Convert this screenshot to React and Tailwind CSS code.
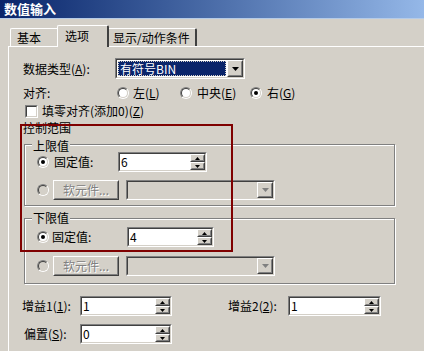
import React from "react";

const FONT = { fontFamily: '"Noto Sans CJK SC", "Liberation Sans", sans-serif' };

// sunken 2px field (classic win look)
function Sunken({ className = "", inner = "bg-white", children }) {
  return (
    <div
      className={`border border-t-[#808080] border-l-[#808080] border-b-white border-r-white ${className}`}
    >
      <div
        className={`h-full w-full border border-t-[#404040] border-l-[#404040] border-b-[#d4d0c8] border-r-[#d4d0c8] ${inner}`}
      >
        {children}
      </div>
    </div>
  );
}

function Raised({ className = "", children }) {
  return (
    <div
      className={`border border-t-white border-l-white border-b-[#404040] border-r-[#404040] ${className}`}
    >
      <div className="h-full w-full border border-t-[#d4d0c8] border-l-[#d4d0c8] border-b-[#808080] border-r-[#808080] bg-[#d4d0c8] flex items-center justify-center">
        {children}
      </div>
    </div>
  );
}

function Radio({ checked = false, disabled = false }) {
  return (
    <div className="w-[12px] h-[12px] shrink-0 rounded-full border border-t-[#808080] border-l-[#808080] border-b-white border-r-white">
      <div
        className={`w-full h-full rounded-full border border-t-[#404040] border-l-[#404040] border-b-[#d4d0c8] border-r-[#d4d0c8] flex items-center justify-center ${
          disabled ? "bg-[#d4d0c8]" : "bg-white"
        }`}
      >
        {checked && <div className="w-[4px] h-[4px] rounded-full bg-black" />}
      </div>
    </div>
  );
}

function Arrow({ up = false, color = "#000" }) {
  return (
    <svg width="7" height="4" viewBox="0 0 7 4">
      <path d={up ? "M3.5 0 L7 4 L0 4 Z" : "M0 0 L7 0 L3.5 4 Z"} fill={color} />
    </svg>
  );
}

function Spin({ value, className }) {
  return (
    <Sunken className={`h-[20px] ${className}`}>
      <div className="flex h-full">
        <div className="flex-1 pl-[1px] text-[12px] leading-[16px] text-black">{value}</div>
        <div className="flex flex-col w-[15px]">
          <Raised className="h-[8px] w-[15px]">
            <svg width="5" height="3" viewBox="0 0 5 3"><path d="M2.5 0 L5 3 L0 3Z" fill="#000" /></svg>
          </Raised>
          <Raised className="h-[8px] w-[15px]">
            <svg width="5" height="3" viewBox="0 0 5 3"><path d="M0 0 L5 0 L2.5 3Z" fill="#000" /></svg>
          </Raised>
        </div>
      </div>
    </Sunken>
  );
}

function DisabledRow() {
  return (
    <div className="flex items-center h-[20px]">
      <div className="ml-[12px]">
        <Radio disabled />
      </div>
      <Raised className="ml-[4px] w-[66px] h-[20px]">
        <span className="text-[12px] text-[#808080] [text-shadow:1px_1px_0_#fff]">软元件...</span>
      </Raised>
      <Sunken className="ml-[7px] w-[149px] h-[20px]" inner="bg-[#d4d0c8]">
        <div className="flex justify-end h-full">
          <Raised className="w-[16px] h-full">
            <svg width="7" height="4" viewBox="0 0 7 4">
              <path d="M0 0 L7 0 L3.5 4 Z" fill="#808080" />
            </svg>
          </Raised>
        </div>
      </Sunken>
    </div>
  );
}

function Group({ label, className, labelClass = "top-[-7px]", children }) {
  return (
    <div
      className={`relative ml-[15px] w-[371px] border border-[#808080] shadow-[inset_1px_1px_0_#fff,1px_1px_0_#fff] ${className}`}
    >
      <span className={`absolute left-[7px] px-[1px] bg-[#d4d0c8] text-[12px] leading-[12px] ${labelClass}`}>
        {label}
      </span>
      {children}
    </div>
  );
}

export default function App() {
  return (
    <div
      className="relative w-[424px] h-[351px] overflow-hidden bg-[#d4d0c8] text-black text-[12px]"
      style={FONT}
    >
      {/* title bar */}
      <div className="h-[19px] bg-gradient-to-r from-[#0a246a] to-[#95b8e8] flex items-center pl-[4px] border-b border-[#b5cbe8]">
        <span className="text-white font-bold text-[13px] leading-[14px]">数值输入</span>
      </div>

      {/* tabs */}
      <div className="flex items-end h-[27px] pl-[10px] mt-0">
        <div className="w-[47px] h-[18px] border-l border-t border-white rounded-tl-[2px] flex items-center pl-[6px] leading-[14px]">
          基本
        </div>
        <div className="relative z-10 w-[52px] h-[22px] -mb-[1px] bg-[#d4d0c8] border-l border-t border-white border-r-2 border-r-[#404040] rounded-t-[2px] flex items-start pt-[3px] pl-[7px] leading-[14px]">
          选项
        </div>
        <div className="w-[88px] h-[18px] border-t border-white border-r-2 border-r-[#404040] rounded-tr-[2px] flex items-center pl-[4px] leading-[14px]">
          显示/动作条件
        </div>
      </div>

      {/* panel */}
      <div className="ml-[8px] h-[310px] border-l border-t border-white flex flex-col">
        {/* data type */}
        <div className="flex items-center h-[21px] mt-[11px] ml-[14px]">
          <span className="w-[92px]">
            数据类型(<u>A</u>):
          </span>
          <Sunken className="w-[130px] h-[21px]">
            <div className="flex h-full items-stretch">
              <div className="flex-1 m-[1px] bg-[#0a246a] text-white outline-1 outline-dotted outline-[#d4d0c8] -outline-offset-1 pl-[2px] leading-[15px]">
                有符号BIN
              </div>
              <Raised className="w-[16px]">
                <Arrow />
              </Raised>
            </div>
          </Sunken>
        </div>

        {/* align */}
        <div className="flex items-center h-[16px] mt-[6px] ml-[14px]">
          <span className="w-[94px]">对齐:</span>
          <div className="w-[63px] flex items-center gap-[4px]">
            <Radio />
            <span>
              左(<u>L</u>)
            </span>
          </div>
          <div className="w-[70px] flex items-center gap-[5px]">
            <Radio />
            <span>
              中央(<u>E</u>)
            </span>
          </div>
          <div className="flex items-center gap-[5px]">
            <Radio checked />
            <span>
              右(<u>G</u>)
            </span>
          </div>
        </div>

        {/* zero fill */}
        <div className="flex items-center h-[16px] mt-[2px] ml-[16px] gap-[4px]">
          <Sunken className="w-[13px] h-[13px]" />
          <span>
            填零对齐(添加0)(<u>Z</u>)
          </span>
        </div>

        <div className="mt-[3px] ml-[14px] h-[12px] leading-[12px]">控制范围</div>

        {/* upper */}
        <Group label="上限值" className="mt-[10px] h-[62px]" labelClass="top-[-5px]">
          <div className="flex items-center h-[20px] mt-[7px]">
            <div className="ml-[12px]">
              <Radio checked />
            </div>
            <span className="ml-[5px] w-[64px]">固定值:</span>
            <Spin value="6" className="w-[89px]" />
          </div>
          <div className="mt-[8px]">
            <DisabledRow />
          </div>
        </Group>

        {/* lower */}
        <Group label="下限值" className="mt-[12px] h-[66px]">
          <div className="flex items-center h-[20px] mt-[8px]">
            <div className="ml-[12px]">
              <Radio checked />
            </div>
            <span className="ml-[3px] w-[75px]">固定值:</span>
            <Spin value="4" className="w-[87px]" />
          </div>
          <div className="mt-[9px]">
            <DisabledRow />
          </div>
        </Group>

        {/* gains */}
        <div className="flex items-center h-[20px] mt-[12px] ml-[13px]">
          <span className="w-[58px]">
            增益1(<u>1</u>):
          </span>
          <Spin value="1" className="w-[92px]" />
          <span className="ml-[56px] w-[60px]">
            增益2(<u>2</u>):
          </span>
          <Spin value="1" className="w-[93px]" />
        </div>
        <div className="flex items-center h-[20px] mt-[8px] ml-[15px]">
          <span className="w-[56px]">
            偏置(<u>S</u>):
          </span>
          <Spin value="0" className="w-[92px]" />
        </div>
      </div>

      {/* red annotation box */}
      <div className="absolute left-[20px] top-[124px] w-[213px] h-[128px] border-2 border-[#7f0000] pointer-events-none" />
    </div>
  );
}
